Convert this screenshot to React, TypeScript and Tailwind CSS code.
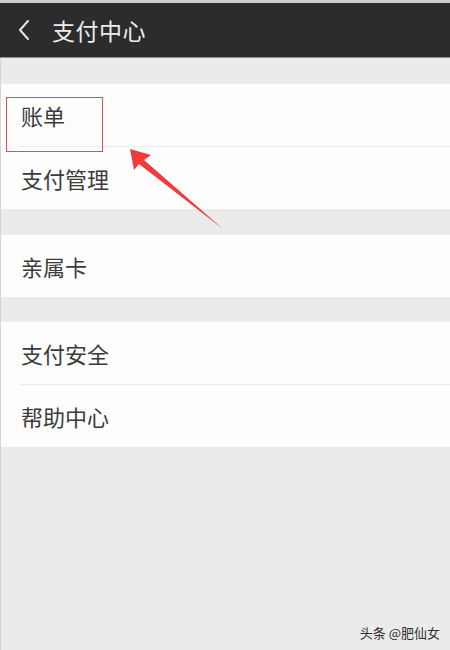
import React from 'react';

const font = { fontFamily: '"Noto Sans CJK SC", "Noto Sans", sans-serif' };

function Row({ label, divider }: { label: string; divider?: boolean }) {
  return (
    <div>
      <div className="h-[62px] flex items-center pl-[21px] text-[22px] text-[#3b3b3b]">{label}</div>
      {divider && <div className="ml-[20px] h-px bg-[#ececec]" />}
    </div>
  );
}

export default function App() {
  return (
    <div className="relative w-[450px] h-[650px] flex flex-col bg-[#ebebeb] overflow-hidden" style={font}>
      {/* top strip + title bar */}
      <div className="h-[3px] bg-[#cfcfcf]" />
      <div className="h-[54px] bg-[#2c2c2c] flex items-center">
        <svg className="ml-[17px] w-[14px] h-[22px]" viewBox="0 0 14 22" fill="none">
          <path d="M11 2 L3 11 L11 20" stroke="#e6e6e6" strokeWidth="2" strokeLinecap="round" strokeLinejoin="round" />
        </svg>
        <span className="ml-[21px] text-[23px] text-[#ededed] tracking-[0.5px]">支付中心</span>
      </div>
      <div className="h-px bg-[#8e8e8e]" />

      <div className="h-[26px]" />
      <div className="bg-[#fdfdfd]">
        <Row label="账单" divider />
        <Row label="支付管理" />
      </div>

      <div className="h-[26px]" />
      <div className="bg-[#fdfdfd]">
        <Row label="亲属卡" />
      </div>

      <div className="h-[25px]" />
      <div className="bg-[#fdfdfd]">
        <Row label="支付安全" divider />
        <Row label="帮助中心" />
      </div>

      <div className="mt-auto mb-[8px] self-end mr-[10px] text-[13px] text-[#2e2e2e]">头条 @肥仙女</div>

      {/* annotations: highlight box and arrow */}
      <svg className="absolute left-0 top-0 w-[450px] h-[650px] pointer-events-none" viewBox="0 0 450 650">
        <line x1="0.5" y1="58" x2="0.5" y2="650" stroke="#d6d6d6" strokeWidth="1" />
        <rect x="6.5" y="97.5" width="96" height="54" fill="none" stroke="#e05050" strokeWidth="1" />
        <path d="M130 149 L151 155 L144 160 L223 229 L139 164 L134 170 Z" fill="#f23a3a" />
      </svg>
    </div>
  );
}
